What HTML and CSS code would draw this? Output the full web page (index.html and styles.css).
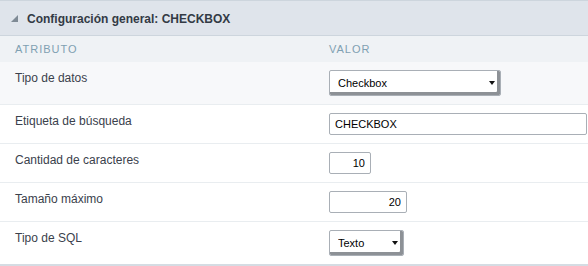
FILE: index.html
```html
<!DOCTYPE html>
<html lang="es">
<head>
  <meta charset="UTF-8">
  <title>Configuración general: CHECKBOX</title>
  <link rel="stylesheet" href="styles.css">
</head>
<body>
  <div class="panel">
    <div class="panel-title">
      <svg class="toggle" width="7" height="7" viewBox="0 0 7 7"><polygon points="0,7 7,7 7,0"/></svg>
      <span>Configuración general: CHECKBOX</span>
    </div>

    <table class="props">
      <thead>
        <tr>
          <th class="col-attr">Atributo</th>
          <th>Valor</th>
        </tr>
      </thead>
      <tbody>
        <tr class="active">
          <td class="label">Tipo de datos</td>
          <td>
            <div class="select-wrap wide">
              <select><option>Checkbox</option></select>
            </div>
          </td>
        </tr>
        <tr>
          <td class="label">Etiqueta de búsqueda</td>
          <td><input class="field full" type="text" value="CHECKBOX"></td>
        </tr>
        <tr>
          <td class="label">Cantidad de caracteres</td>
          <td><input class="field num small" type="text" value="10"></td>
        </tr>
        <tr>
          <td class="label">Tamaño máximo</td>
          <td><input class="field num medium" type="text" value="20"></td>
        </tr>
        <tr>
          <td class="label">Tipo de SQL</td>
          <td>
            <div class="select-wrap narrow">
              <select><option>Texto</option></select>
            </div>
          </td>
        </tr>
      </tbody>
    </table>
  </div>
</body>
</html>
```

FILE: styles.css
```css
:root {
  --head-bg: #dfe4eb;
  --head-border: #cdd5dd;
  --sub-bg: #eff2f5;
  --row-line: #e9edf0;
  --text-color: #3a414c;
  --caption-color: #7fa0b2;
  --field-border: #a9afb6;
}
body {
  margin: 0;
  font-family: "Liberation Sans", Arial, sans-serif;
  color: var(--text-color);
  background: #fff;
}
.panel {
  width: 588px;
  border-bottom: 2px solid #d5dce3;
}
.panel-title {
  display: flex;
  align-items: center;
  gap: 9px;
  height: 34px;
  padding-left: 11px;
  background-color: var(--head-bg);
  border-top: 1px solid var(--head-border);
  border-bottom: 1px solid var(--head-border);
  font-size: 12px;
  font-weight: bold;
  color: #333a45;
}
.panel-title span {
  margin-top: 1px;
}
.toggle {
  fill: #7f8a95;
  margin-top: 1px;
}
.props {
  width: 100%;
  border-collapse: collapse;
}
.props th {
  height: 26px;
  padding: 0;
  background-color: var(--sub-bg);
  text-align: left;
  font-size: 11px;
  font-weight: normal;
  letter-spacing: 1px;
  text-transform: uppercase;
  color: var(--caption-color);
  vertical-align: middle;
}
.props th.col-attr {
  width: 314px;
  padding-left: 15px;
}
.props td {
  padding: 8px 1px 8px 0;
  vertical-align: top;
  border-top: 1px solid var(--row-line);
}
.props tbody tr:first-child td {
  border-top: none;
}
.props tr.active td {
  background-color: #f7f8fa;
}
.props td.label {
  padding-left: 15px;
  padding-top: 9px;
  font-size: 12px;
  line-height: 15px;
}
.field {
  box-sizing: border-box;
  display: block;
  height: 22px;
  padding: 0 5px;
  border: 1px solid var(--field-border);
  border-radius: 2px;
  font-family: "Liberation Sans", Arial, sans-serif;
  font-size: 11px;
  color: #000;
  background: #fff;
}
.field.full { width: 258px; }
.field.small { width: 42px; }
.field.medium { width: 78px; }
.field.num { text-align: right; }
.select-wrap {
  position: relative;
  height: 26px;
}
.select-wrap.wide { width: 172px; }
.select-wrap.narrow { width: 75px; }
.select-wrap select {
  appearance: none;
  box-sizing: border-box;
  width: 100%;
  height: 100%;
  padding: 0 0 0 8px;
  border: 1px solid var(--field-border);
  border-radius: 2px;
  box-shadow: inset -3px -3px 0 #8d9196;
  font-family: "Liberation Sans", Arial, sans-serif;
  font-size: 11px;
  color: #000;
  background: #fff;
}
.select-wrap::after {
  content: "";
  position: absolute;
  right: 6px;
  top: 11px;
  border-left: 3px solid transparent;
  border-right: 3px solid transparent;
  border-top: 4px solid #111;
  pointer-events: none;
}
```
